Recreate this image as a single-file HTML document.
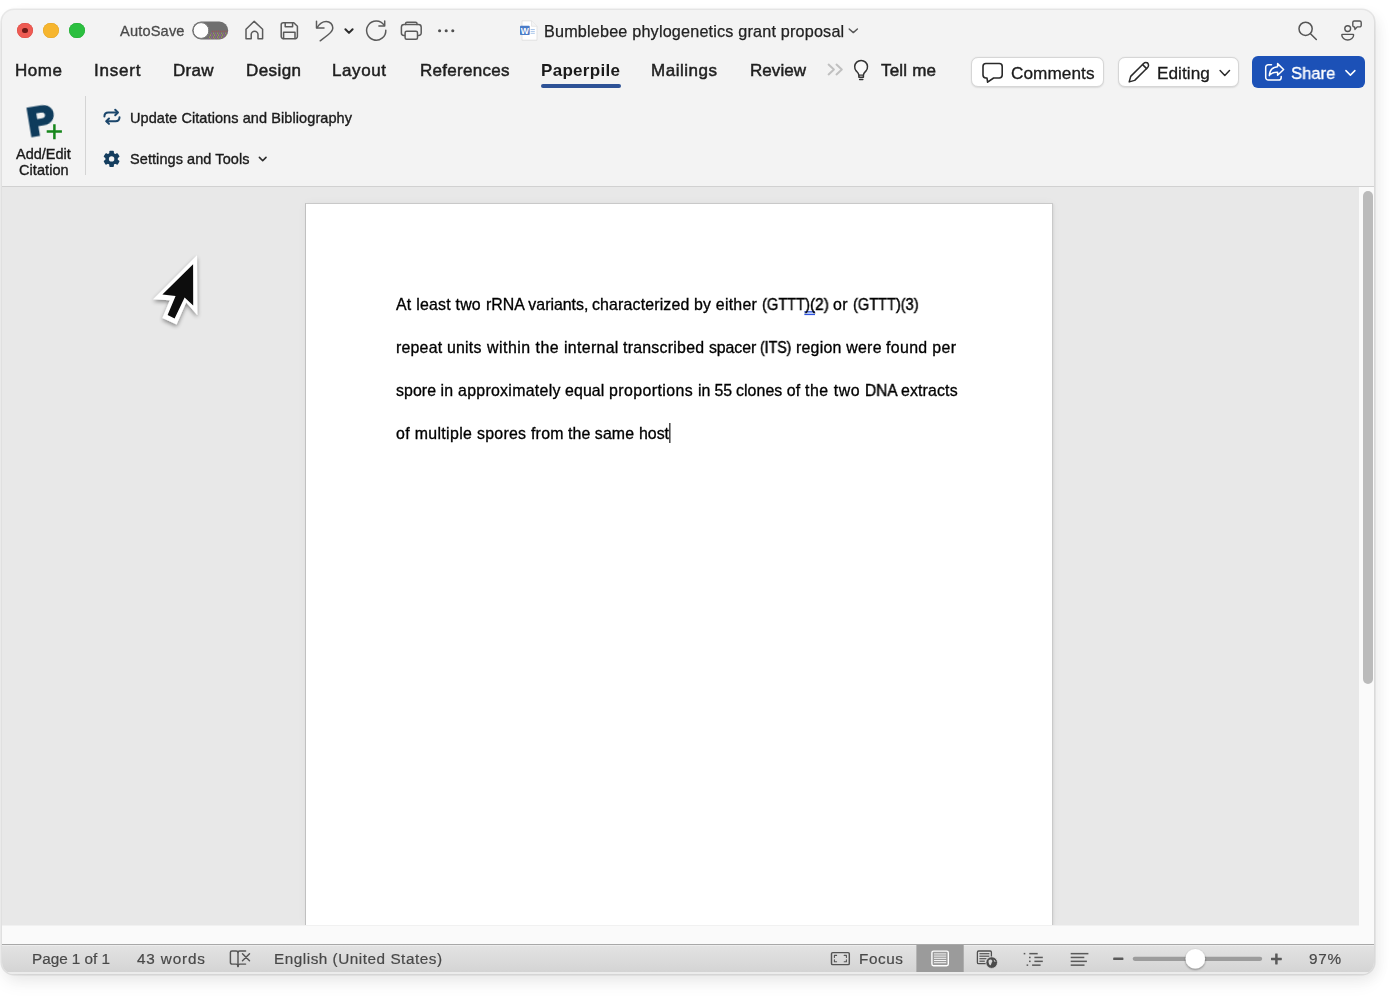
<!DOCTYPE html>
<html lang="en"><head><meta charset="utf-8"><title>Bumblebee phylogenetics grant proposal</title>
<style>
html,body{margin:0;padding:0;}
body{width:1400px;height:1000px;background:#fff;position:relative;overflow:hidden;font-family:"Liberation Sans",sans-serif;}
.abs{position:absolute;}
.t{position:absolute;white-space:pre;font-family:"Liberation Sans",sans-serif;will-change:transform;}
#win{position:absolute;left:2px;top:10px;width:1372px;height:964px;border-radius:12px;background:#f3f3f3;
 box-shadow:0 0 0 1.6px rgba(0,0,0,0.085), 0 9px 18px rgba(0,0,0,0.06), 5px 4px 14px rgba(0,0,0,0.05);overflow:hidden;}
#win > div{position:absolute;}
#ribline{left:0;top:176.1px;width:1372px;height:1.5px;background:#d1d1d1;box-shadow:0 1px 0 #ebebeb;}
#docbg{left:0;top:177px;width:1357px;height:738px;background:#e8e8e8;}
#vtrack{left:1357px;top:177px;width:16px;height:757px;background:#fafafa;}
#vthumb{left:1360.9px;top:181px;width:10.2px;height:493px;border-radius:5.1px;background:#bbbbbb;}
#hstrip{left:0;top:915px;width:1357px;height:19px;background:#fafafa;border-top:1px solid #f1f1f1;box-sizing:border-box;}
#status{left:0;top:934px;width:1372px;height:28px;background:linear-gradient(#e3e3e3,#d4d4d4);border-top:1px solid #a8a8a8;box-sizing:border-box;box-shadow:inset 0 1px 0 rgba(255,255,255,0.35);}
#statedge{left:0;top:962px;width:1372px;height:2px;background:#ececec;}
#page{left:303px;top:192.5px;width:747.5px;height:722.5px;background:#fff;border:solid #c9c9c9;border-width:1.5px 1.6px 0 1px;border-left-color:#c0c0c0;box-sizing:border-box;box-shadow:0.5px 0.5px 2px rgba(0,0,0,0.06), 0 0 9px rgba(0,0,0,0.035);}
.btn{position:absolute;box-sizing:border-box;border-radius:7px;background:#fff;border:1px solid #d6d6d6;box-shadow:0 0.5px 1.5px rgba(0,0,0,0.10);}
svg{position:absolute;overflow:visible;}

</style></head><body>
<div id="win">
  <div id="ribline"></div>
  <div id="docbg"></div>
  <div id="page"></div>
  <div id="vtrack"></div>
  <div id="vthumb"></div>
  <div id="hstrip"></div>
  <div id="status"></div>
  <div id="statedge"></div>
</div>
<!-- traffic lights -->
<div class="abs" style="left:17.2px;top:22.8px;width:15.7px;height:15.7px;border-radius:50%;background:#ee5b53;box-shadow:inset 0 0 0 0.5px #dd4a42;"></div>
<div class="abs" style="left:22.4px;top:28px;width:5.4px;height:5.4px;border-radius:50%;background:#6e1a17;"></div>
<div class="abs" style="left:43.2px;top:22.8px;width:15.7px;height:15.7px;border-radius:50%;background:#f6b52e;box-shadow:inset 0 0 0 0.5px #e2a425;"></div>
<div class="abs" style="left:69.2px;top:22.8px;width:15.7px;height:15.7px;border-radius:50%;background:#2bbf3f;box-shadow:inset 0 0 0 0.5px #22ab33;"></div>
<!-- buttons -->
<div class="btn" style="left:971px;top:56.8px;width:132.5px;height:30.2px;"></div>
<div class="btn" style="left:1117.8px;top:56.8px;width:121px;height:30.2px;"></div>
<div class="abs" style="left:1252px;top:56px;width:112.5px;height:32px;border-radius:6px;background:#1c51b7;"></div>
<!-- tab underline -->
<div class="abs" style="left:541px;top:84px;width:80px;height:3.5px;border-radius:2px;background:#2d5296;"></div>
<!-- ribbon sep -->
<div class="abs" style="left:84.5px;top:96px;width:1px;height:79px;background:#d4d4d4;"></div>

<svg class="ov" width="1400" height="1000" viewBox="0 0 1400 1000" style="left:0;top:0;">
 <defs>
  <filter id="cshadow" x="-50%" y="-50%" width="200%" height="200%"><feGaussianBlur in="SourceAlpha" stdDeviation="2.2"/><feOffset dx="0" dy="2"/><feComponentTransfer><feFuncA type="linear" slope="0.45"/></feComponentTransfer><feMerge><feMergeNode/><feMergeNode in="SourceGraphic"/></feMerge></filter>
  <filter id="kshadow" x="-50%" y="-50%" width="200%" height="200%"><feGaussianBlur in="SourceAlpha" stdDeviation="0.9"/><feOffset dx="0" dy="0.6"/><feComponentTransfer><feFuncA type="linear" slope="0.45"/></feComponentTransfer><feMerge><feMergeNode/><feMergeNode in="SourceGraphic"/></feMerge></filter>
  <pattern id="dith" x="208" y="30.6" width="4" height="4" patternUnits="userSpaceOnUse">
   <rect x="0.2" y="0.2" width="0.9" height="0.9" fill="#d23cd2"/><rect x="2.2" y="0.2" width="0.9" height="0.9" fill="#cfd230"/>
   <rect x="1.2" y="2.2" width="0.9" height="0.9" fill="#cfd230"/><rect x="3.2" y="2.2" width="0.9" height="0.9" fill="#d23cd2"/>
  </pattern>
  <pattern id="dithr" x="208" y="30.6" width="2" height="4" patternUnits="userSpaceOnUse">
   <rect x="0.2" y="0.2" width="0.9" height="0.9" fill="#d03434"/>
  </pattern>
  <clipPath id="pill"><rect x="192.2" y="21.6" width="36" height="17.8" rx="8.9"/></clipPath>
 </defs>
 <!-- ===== title bar icons ===== -->
 <g fill="none" stroke="#5b5b5b" stroke-width="1.5" stroke-linecap="round" stroke-linejoin="round">
  <!-- toggle -->
  <rect x="192.2" y="21.6" width="36" height="17.8" rx="8.9" fill="#6f6f6f" stroke="none"/>
  <g clip-path="url(#pill)" stroke="none"><path d="M212 30.6 H228 V32.6 H210.6 Z" fill="url(#dithr)"/><path d="M210.4 32.6 H228 V39.4 H207 Z" fill="url(#dith)"/></g>
  <circle cx="201.1" cy="30.5" r="7.9" fill="#fdfdfd" stroke="#737373" stroke-width="1"/>
  <!-- home -->
  <path d="M246 38.7 V29.2 L254.2 21.3 L262.6 29.2 V38.7 H258 V34.6 A3.4 3.4 0 0 0 251.2 34.6 V38.7 Z"/>
  <!-- save -->
  <path d="M283 22.7 H293.8 L297.4 26.3 V36.6 A2.1 2.1 0 0 1 295.3 38.7 H283.3 A2.1 2.1 0 0 1 281.2 36.6 V24.8 A2.1 2.1 0 0 1 283.3 22.7 Z"/>
  <path d="M285.2 22.9 V26.8 H292.6 V22.9"/>
  <path d="M283.6 38.5 V32.2 H295 V38.5"/>
  <!-- undo -->
  <path d="M316.5 21.2 V28 H324"/>
  <path d="M317 27.6 C319.5 23.4 322.6 21.4 326.2 21.4 C330 21.4 332.9 24.4 332.8 28 C332.7 31 330.6 32.8 327.8 35 L320.2 40.8"/>
  <!-- redo -->
  <path d="M384.7 21 V25.9 H378.9"/>
  <path d="M384.2 25.3 A9.6 9.6 0 1 0 385.8 30.2"/>
  <!-- printer -->
  <path d="M405.6 24.4 V23.6 A1.4 1.4 0 0 1 407 22.2 H415.6 A1.4 1.4 0 0 1 417 23.6 V24.4"/>
  <path d="M405 35.4 H403.8 A2.4 2.4 0 0 1 401.4 33 V27.2 A2.7 2.7 0 0 1 404.1 24.5 H418.5 A2.7 2.7 0 0 1 421.2 27.2 V33 A2.4 2.4 0 0 1 418.8 35.4 H417.6"/>
  <rect x="405.1" y="31.3" width="12.4" height="8" rx="1.5" fill="#f3f3f3"/>
 </g>
 <!-- undo chevron -->
 <path d="M345.4 29.2 L349 32.9 L352.6 29.2" fill="none" stroke="#2c2c2c" stroke-width="2" stroke-linecap="round" stroke-linejoin="round"/>
 <!-- dots -->
 <g fill="#505050"><circle cx="439.6" cy="30.8" r="1.55"/><circle cx="446.2" cy="30.8" r="1.55"/><circle cx="452.8" cy="30.8" r="1.55"/></g>
 <!-- doc icon -->
 <g>
  <path d="M522 20.8 H531.5 L537 26.3 V40.2 H522 Z" fill="#fff" stroke="#dcdcdc" stroke-width="0.8" stroke-linejoin="round"/>
  <path d="M531.5 20.8 V26.3 H537" fill="#f4f4f4" stroke="#dcdcdc" stroke-width="0.6"/>
  <rect x="520" y="25.8" width="9.7" height="9.2" rx="0.8" fill="#4a7cc8"/>
  <rect x="530.6" y="29" width="4.2" height="1" fill="#a9c6ea"/><rect x="530.6" y="30.9" width="4.2" height="1" fill="#a9c6ea"/><rect x="530.6" y="32.8" width="4.2" height="1" fill="#a9c6ea"/>
  <text x="524.85" y="33.6" font-family="Liberation Sans, sans-serif" font-weight="700" font-size="8.6" fill="#fff" text-anchor="middle">W</text>
 </g>
 <!-- title chevron -->
 <path d="M849.2 29 L853.3 32.6 L857.4 29" fill="none" stroke="#555" stroke-width="1.4" stroke-linecap="round" stroke-linejoin="round"/>
 <!-- search -->
 <g fill="none" stroke="#555" stroke-width="1.5" stroke-linecap="round">
  <circle cx="1305.6" cy="28.8" r="6.6"/><path d="M1310.5 33.7 L1316.3 39.5"/>
 </g>
 <!-- people -->
 <g fill="none" stroke="#555" stroke-width="1.4" stroke-linejoin="round" stroke-linecap="round">
  <circle cx="1347.7" cy="28.6" r="2.9"/>
  <path d="M1342.4 34.4 H1353 A0.6 0.6 0 0 1 1353.6 35 A5.9 5 0 0 1 1341.8 35 A0.6 0.6 0 0 1 1342.4 34.4 Z"/>
  <path d="M1354.3 21 H1359.7 A1.5 1.5 0 0 1 1361.2 22.5 V25.4 A1.5 1.5 0 0 1 1359.7 26.9 H1357.2 L1355 29.4 L1354.6 26.9 H1354.3 A1.5 1.5 0 0 1 1352.8 25.4 V22.5 A1.5 1.5 0 0 1 1354.3 21 Z"/>
 </g>
 <!-- ===== tab row ===== -->
 <g fill="none" stroke="#c0c0c0" stroke-width="2" stroke-linecap="round" stroke-linejoin="round">
  <path d="M828.6 64.6 L833.9 69.5 L828.6 74.4"/><path d="M836.5 64.6 L841.8 69.5 L836.5 74.4"/>
 </g>
 <!-- bulb -->
 <g fill="none" stroke="#333" stroke-width="1.5" stroke-linecap="round" stroke-linejoin="round">
  <path d="M858.9 77.2 V75.2 C858.9 73.2 857.5 72.2 856.2 70.9 A6.4 6.4 0 1 1 866 70.9 C864.7 72.2 863.4 73.2 863.4 75.2 V77.2 Z" fill="#f9f9f9"/>
  <path d="M859 75.2 H863.3" stroke-width="1.2"/>
  <path d="M859.6 79.5 H862.8"/>
 </g>
 <!-- comment bubble -->
 <path d="M985.9 63.5 H999.3 A2.9 2.9 0 0 1 1002.2 66.4 V75.1 A2.9 2.9 0 0 1 999.3 78 H993.6 L987.6 82.2 L987 78 H985.9 A2.9 2.9 0 0 1 983 75.1 V66.4 A2.9 2.9 0 0 1 985.9 63.5 Z" fill="none" stroke="#2a2a2a" stroke-width="1.6" stroke-linejoin="round"/>
 <!-- pencil -->
 <g fill="none" stroke="#2a2a2a" stroke-width="1.5" stroke-linejoin="round" stroke-linecap="round">
  <path d="M1129.2 81.9 L1130.7 76.4 L1143.6 63.5 A3.1 3.1 0 0 1 1148 63.5 L1147.6 63.1 A3.1 3.1 0 0 1 1147.6 67.5 L1134.7 80.4 Z"/>
  <path d="M1142.6 64.6 L1146.6 68.6"/>
 </g>
 <path d="M1220.1 70.6 L1224.8 75.4 L1229.5 70.6" fill="none" stroke="#2a2a2a" stroke-width="1.5" stroke-linecap="round" stroke-linejoin="round"/>
 <!-- share icon -->
 <g fill="none" stroke="#fff" stroke-width="1.5" stroke-linejoin="round" stroke-linecap="round">
  <path d="M1271.5 64.8 H1268.3 A2.6 2.6 0 0 0 1265.7 67.4 V77.5 A2.6 2.6 0 0 0 1268.3 80.1 H1278.6 A2.6 2.6 0 0 0 1281.2 77.5 V76.4"/>
  <path d="M1277.6 63.6 L1283.6 69.5 L1277.6 75.2 V72.2 C1273.6 72 1271 73 1269.3 75.6 C1269.6 70.6 1272.6 67.2 1277.6 66.8 Z"/>
 </g>
 <path d="M1345.9 70.6 L1350.4 75.1 L1354.9 70.6" fill="none" stroke="#fff" stroke-width="1.5" stroke-linecap="round" stroke-linejoin="round"/>
 <!-- ===== ribbon ===== -->
 <!-- plus -->
 <path d="M54.4 124.2 V139.3 M46.7 131.6 H61.9" stroke="#16861b" stroke-width="2.5" fill="none"/>
 <!-- update arrows -->
 <g fill="none" stroke="#1b466b" stroke-width="2" stroke-linecap="round" stroke-linejoin="round">
  <path d="M104.4 116.6 C104.4 114 106 112.5 108.4 112.5 H117.6"/><path d="M115.2 109.8 L117.9 112.5 L115.2 115.2"/>
  <path d="M119.5 117.2 C119.5 119.8 117.9 121.2 115.5 121.2 H106.6"/><path d="M109 118.5 L106.3 121.2 L109 123.9"/>
 </g>
 <!-- gear -->
 <g transform="translate(111.6 158.9)">
  <g fill="#143d5e">
   <circle r="6.2"/>
   <g id="teeth"><rect x="-2.3" y="-8.1" width="4.6" height="16.2" rx="0.9"/></g>
   <rect x="-2.3" y="-8.1" width="4.6" height="16.2" rx="0.9" transform="rotate(60)"/>
   <rect x="-2.3" y="-8.1" width="4.6" height="16.2" rx="0.9" transform="rotate(120)"/>
  </g>
  <circle r="2.7" fill="#f3f3f3"/>
 </g>
 <path d="M259.4 157.4 L262.7 160.7 L266 157.4" fill="none" stroke="#2a2a2a" stroke-width="1.6" stroke-linecap="round" stroke-linejoin="round"/>
 <!-- ===== document ===== -->
 <rect x="669.3" y="423" width="1.1" height="20" fill="#000"/>
 <rect x="804.4" y="311.6" width="10.6" height="3.4" fill="#cfe0fa"/><g fill="#2f52e0"><rect x="804.4" y="311.2" width="10.6" height="1.2"/><rect x="804.4" y="313.9" width="10.6" height="1.2"/></g>
 <!-- cursor -->
 <g filter="url(#cshadow)">
  <path d="M197 255.2 L197.4 315.2 L186.2 302.6 L176.6 324.6 L162.4 318 L169.8 300.2 L153.2 299.2 Z" fill="#fff"/>
  <path d="M193.1 264.2 L193.2 305.6 L184.6 297.4 L174.6 318.4 L167.6 315 L175.6 296 L162.4 294.6 Z" fill="#0c0c0c"/>
 </g>
 <!-- ===== status bar ===== -->
 <g fill="none" stroke="#555" stroke-width="1.45" stroke-linecap="round" stroke-linejoin="round">
  <path d="M238 952.6 C238 951.4 237.2 950.9 236.2 950.9 H232 A1.6 1.6 0 0 0 230.4 952.5 V962.5 A1.6 1.6 0 0 0 232 964.1 H236.2 C237.2 964.1 238 964.7 238 966.4 V952.6"/>
  <path d="M238 952.6 C238 951.4 238.8 950.9 239.8 950.9 H245.6"/><path d="M238 966.4 C238 964.7 238.8 964.1 239.8 964.1 H245.6"/>
  <path d="M242.5 953.7 L249.5 960.7 M249.5 953.7 L242.5 960.7"/>
  <!-- focus -->
  <rect x="831.5" y="952.6" width="17.8" height="12" rx="1.2"/>
  <path d="M834.4 957.4 V955.4 H836.6 M844.2 955.4 H846.4 V957.4 M846.4 959.8 V961.8 H844.2 M836.6 961.8 H834.4 V959.8" stroke-width="1.1"/>
 </g>
 <!-- print layout selected -->
 <rect x="916.4" y="945" width="47.3" height="27" fill="#9b9b9b"/>
 <rect x="931.9" y="951.1" width="16.4" height="14.6" rx="1.6" fill="none" stroke="#fff" stroke-width="1.4"/>
 <g fill="#f4f4f4"><rect x="934" y="953.4" width="12.2" height="1"/><rect x="934" y="955.6" width="12.2" height="1"/><rect x="934" y="957.8" width="12.2" height="1"/><rect x="934" y="960" width="12.2" height="1"/><rect x="934" y="962.2" width="12.2" height="1"/></g>
 <!-- web layout -->
 <rect x="977.4" y="951" width="14" height="12.6" rx="1.2" fill="none" stroke="#4f4f4f" stroke-width="1.3"/>
 <g fill="#555"><rect x="979.4" y="953.1" width="10" height="1.2"/><rect x="979.4" y="955.6" width="10" height="1.2"/><rect x="979.4" y="958.1" width="7" height="1.2"/><rect x="979.4" y="960.6" width="5.4" height="1.2"/></g>
 <circle cx="991.7" cy="962.6" r="5.8" fill="#4b4b4b" stroke="#dcdcdc" stroke-width="0.8"/>
 <path d="M988.6 960.4 C989.8 959 991.6 959.4 992.2 960.6 C992.8 961.8 991.8 962.4 991.4 963.4 C991 964.6 990.6 965.8 989.8 965 C989 964 988.2 962 988.6 960.4 Z M993.6 959.6 C994.6 960 995.4 961 995.6 962 C995 962.4 994 961.8 993.6 959.6 Z" fill="#d8d8d8"/>
 <!-- outline -->
 <g fill="#5a5a5a">
  <rect x="1023.7" y="952.9" width="1.6" height="1.5"/><rect x="1029.3" y="952.9" width="8.4" height="1.5"/>
  <rect x="1029" y="956.7" width="1.6" height="1.5"/><rect x="1034.4" y="956.7" width="8.4" height="1.5"/>
  <rect x="1029" y="960.6" width="1.6" height="1.5"/><rect x="1034.4" y="960.6" width="8.4" height="1.5"/>
  <rect x="1026.6" y="964.4" width="1.6" height="1.5"/><rect x="1032.1" y="964.4" width="8.5" height="1.5"/>
  <!-- draft -->
  <rect x="1070.7" y="952.9" width="17.7" height="1.5"/><rect x="1070.7" y="956.7" width="13.6" height="1.5"/>
  <rect x="1070.7" y="960.6" width="16.2" height="1.5"/><rect x="1070.7" y="964.4" width="13.8" height="1.5"/>
  <!-- minus / plus -->
  <rect x="1113.2" y="957.5" width="10.2" height="2.5" rx="0.6"/>
  <rect x="1271" y="957.7" width="10.8" height="2.5" rx="0.4"/><rect x="1275.15" y="953.4" width="2.5" height="11.1" rx="0.4"/>
 </g>
 <rect x="1132.7" y="956.7" width="129.5" height="4.2" rx="2.1" fill="#9c9c9c"/>
 <circle cx="1195.3" cy="958.8" r="9.8" fill="#fff" filter="url(#kshadow)"/>
</svg>
<!-- P logo as real text -->
<div class="abs" style="left:24px;top:100px;width:34px;height:42px;transform:rotate(-9.5deg) scaleX(1.04);transform-origin:50% 50%;font-family:'Liberation Sans',sans-serif;font-weight:700;font-size:39px;line-height:42px;color:#0f3c5c;-webkit-text-stroke:2.8px #0f3c5c;text-align:center;will-change:transform;">P</div>


<!-- text -->
<div class="t" style="left:119.8px;top:21.00px;font-size:14.6px;line-height:20px;font-weight:400;color:#4a4a4a;letter-spacing:0.172px;-webkit-text-stroke:0.3px #4a4a4a;">AutoSave</div>
<div class="t" style="left:543.8px;top:19.50px;font-size:16.2px;line-height:23px;font-weight:400;color:#222;letter-spacing:0.184px;-webkit-text-stroke:0.25px #222;">Bumblebee phylogenetics grant proposal</div>
<div class="t" style="left:15px;top:59.00px;font-size:17px;line-height:24px;font-weight:400;color:#1f1f1f;letter-spacing:0.547px;-webkit-text-stroke:0.5px #1f1f1f;">Home</div>
<div class="t" style="left:94px;top:59.00px;font-size:17px;line-height:24px;font-weight:400;color:#1f1f1f;letter-spacing:0.794px;-webkit-text-stroke:0.5px #1f1f1f;">Insert</div>
<div class="t" style="left:173px;top:59.00px;font-size:17px;line-height:24px;font-weight:400;color:#1f1f1f;letter-spacing:0.276px;-webkit-text-stroke:0.5px #1f1f1f;">Draw</div>
<div class="t" style="left:245.5px;top:59.00px;font-size:17px;line-height:24px;font-weight:400;color:#1f1f1f;letter-spacing:0.416px;-webkit-text-stroke:0.5px #1f1f1f;">Design</div>
<div class="t" style="left:332px;top:59.00px;font-size:17px;line-height:24px;font-weight:400;color:#1f1f1f;letter-spacing:0.591px;-webkit-text-stroke:0.5px #1f1f1f;">Layout</div>
<div class="t" style="left:419.5px;top:59.00px;font-size:17px;line-height:24px;font-weight:400;color:#1f1f1f;letter-spacing:0.285px;-webkit-text-stroke:0.5px #1f1f1f;">References</div>
<div class="t" style="left:651px;top:59.00px;font-size:17px;line-height:24px;font-weight:400;color:#1f1f1f;letter-spacing:0.520px;-webkit-text-stroke:0.5px #1f1f1f;">Mailings</div>
<div class="t" style="left:750px;top:59.00px;font-size:17px;line-height:24px;font-weight:400;color:#1f1f1f;letter-spacing:0.050px;-webkit-text-stroke:0.5px #1f1f1f;">Review</div>
<div class="t" style="left:881px;top:59.00px;font-size:17px;line-height:24px;font-weight:400;color:#1f1f1f;letter-spacing:0.190px;-webkit-text-stroke:0.5px #1f1f1f;">Tell me</div>
<div class="t" style="left:541px;top:59.00px;font-size:17px;line-height:24px;font-weight:700;color:#1a1a1a;letter-spacing:0.307px;">Paperpile</div>
<div class="t" style="left:1010.5px;top:61.40px;font-size:17.2px;line-height:24px;font-weight:400;color:#1a1a1a;letter-spacing:0.058px;-webkit-text-stroke:0.3px #1a1a1a;">Comments</div>
<div class="t" style="left:1156.8px;top:61.40px;font-size:17.2px;line-height:24px;font-weight:400;color:#1a1a1a;letter-spacing:0.040px;-webkit-text-stroke:0.3px #1a1a1a;">Editing</div>
<div class="t" style="left:1291.4px;top:61.40px;font-size:17.2px;line-height:24px;font-weight:400;color:#ffffff;letter-spacing:0.000px;transform:scaleX(0.9678);transform-origin:0 50%;-webkit-text-stroke:0.35px #fff;">Share</div>
<div class="t" style="left:16.2px;top:144.00px;font-size:14.5px;line-height:20px;font-weight:400;color:#1a1a1a;letter-spacing:-0.018px;-webkit-text-stroke:0.35px #1a1a1a;">Add/Edit</div>
<div class="t" style="left:18.7px;top:159.50px;font-size:14.5px;line-height:20px;font-weight:400;color:#1a1a1a;letter-spacing:0.075px;-webkit-text-stroke:0.35px #1a1a1a;">Citation</div>
<div class="t" style="left:130px;top:108.00px;font-size:14.5px;line-height:20px;font-weight:400;color:#1a1a1a;letter-spacing:0.086px;-webkit-text-stroke:0.35px #1a1a1a;">Update Citations and Bibliography</div>
<div class="t" style="left:130px;top:149.00px;font-size:14.5px;line-height:20px;font-weight:400;color:#1a1a1a;letter-spacing:0.074px;-webkit-text-stroke:0.35px #1a1a1a;">Settings and Tools</div>
<div class="t" style="left:396px;top:293.50px;font-size:15.9px;line-height:22px;font-weight:400;color:#000;letter-spacing:0.234px;-webkit-text-stroke:0.32px #000;">At least two </div>
<div class="t" style="left:485.6px;top:293.50px;font-size:15.9px;line-height:22px;font-weight:400;color:#000;letter-spacing:-0.004px;-webkit-text-stroke:0.32px #000;">rRNA variants, </div>
<div class="t" style="left:592.4px;top:293.50px;font-size:15.9px;line-height:22px;font-weight:400;color:#000;letter-spacing:0.156px;-webkit-text-stroke:0.32px #000;">characterized </div>
<div class="t" style="left:694.4px;top:293.50px;font-size:15.9px;line-height:22px;font-weight:400;color:#000;letter-spacing:0.223px;-webkit-text-stroke:0.32px #000;">by either </div>
<div class="t" style="left:762px;top:293.50px;font-size:15.9px;line-height:22px;font-weight:400;color:#000;letter-spacing:0.000px;transform:scaleX(0.9217);transform-origin:0 50%;-webkit-text-stroke:0.46px #000;">(GTTT)</div>
<div class="t" style="left:810px;top:293.50px;font-size:15.9px;line-height:22px;font-weight:400;color:#000;letter-spacing:0.000px;transform:scaleX(0.9646);transform-origin:0 50%;-webkit-text-stroke:0.46px #000;">(2) </div>
<div class="t" style="left:833px;top:293.50px;font-size:15.9px;line-height:22px;font-weight:400;color:#000;letter-spacing:0.484px;-webkit-text-stroke:0.32px #000;">or </div>
<div class="t" style="left:853px;top:293.50px;font-size:15.9px;line-height:22px;font-weight:400;color:#000;letter-spacing:0.000px;transform:scaleX(0.9175);transform-origin:0 50%;-webkit-text-stroke:0.46px #000;">(GTTT)(3)</div>
<div class="t" style="left:396.4px;top:336.50px;font-size:15.9px;line-height:22px;font-weight:400;color:#000;letter-spacing:0.211px;-webkit-text-stroke:0.32px #000;">repeat units </div>
<div class="t" style="left:486.6px;top:336.50px;font-size:15.9px;line-height:22px;font-weight:400;color:#000;letter-spacing:0.496px;-webkit-text-stroke:0.32px #000;">within the </div>
<div class="t" style="left:563.6px;top:336.50px;font-size:15.9px;line-height:22px;font-weight:400;color:#000;letter-spacing:0.317px;-webkit-text-stroke:0.32px #000;">internal </div>
<div class="t" style="left:623px;top:336.50px;font-size:15.9px;line-height:22px;font-weight:400;color:#000;letter-spacing:0.247px;-webkit-text-stroke:0.32px #000;">transcribed </div>
<div class="t" style="left:709px;top:336.50px;font-size:15.9px;line-height:22px;font-weight:400;color:#000;letter-spacing:-0.104px;-webkit-text-stroke:0.32px #000;">spacer </div>
<div class="t" style="left:760.4px;top:336.50px;font-size:15.9px;line-height:22px;font-weight:400;color:#000;letter-spacing:0.000px;transform:scaleX(0.8859);transform-origin:0 50%;-webkit-text-stroke:0.46px #000;">(ITS) </div>
<div class="t" style="left:795.6px;top:336.50px;font-size:15.9px;line-height:22px;font-weight:400;color:#000;letter-spacing:0.246px;-webkit-text-stroke:0.32px #000;">region were </div>
<div class="t" style="left:886px;top:336.50px;font-size:15.9px;line-height:22px;font-weight:400;color:#000;letter-spacing:0.355px;-webkit-text-stroke:0.32px #000;">found per</div>
<div class="t" style="left:396px;top:379.50px;font-size:15.9px;line-height:22px;font-weight:400;color:#000;letter-spacing:0.072px;-webkit-text-stroke:0.32px #000;">spore in </div>
<div class="t" style="left:457.6px;top:379.50px;font-size:15.9px;line-height:22px;font-weight:400;color:#000;letter-spacing:0.290px;-webkit-text-stroke:0.32px #000;">approximately </div>
<div class="t" style="left:565px;top:379.50px;font-size:15.9px;line-height:22px;font-weight:400;color:#000;letter-spacing:0.117px;-webkit-text-stroke:0.32px #000;">equal </div>
<div class="t" style="left:609px;top:379.50px;font-size:15.9px;line-height:22px;font-weight:400;color:#000;letter-spacing:0.423px;-webkit-text-stroke:0.32px #000;">proportions </div>
<div class="t" style="left:698px;top:379.50px;font-size:15.9px;line-height:22px;font-weight:400;color:#000;letter-spacing:-0.079px;-webkit-text-stroke:0.32px #000;">in 55 </div>
<div class="t" style="left:736.4px;top:379.50px;font-size:15.9px;line-height:22px;font-weight:400;color:#000;letter-spacing:0.057px;-webkit-text-stroke:0.32px #000;">clones of </div>
<div class="t" style="left:805px;top:379.50px;font-size:15.9px;line-height:22px;font-weight:400;color:#000;letter-spacing:0.543px;-webkit-text-stroke:0.32px #000;">the two </div>
<div class="t" style="left:865px;top:379.50px;font-size:15.9px;line-height:22px;font-weight:400;color:#000;letter-spacing:0.000px;transform:scaleX(0.9705);transform-origin:0 50%;-webkit-text-stroke:0.46px #000;">DNA </div>
<div class="t" style="left:901px;top:379.50px;font-size:15.9px;line-height:22px;font-weight:400;color:#000;letter-spacing:0.137px;-webkit-text-stroke:0.32px #000;">extracts</div>
<div class="t" style="left:396px;top:422.50px;font-size:15.9px;line-height:22px;font-weight:400;color:#000;letter-spacing:0.346px;-webkit-text-stroke:0.32px #000;">of multiple </div>
<div class="t" style="left:477px;top:422.50px;font-size:15.9px;line-height:22px;font-weight:400;color:#000;letter-spacing:0.257px;-webkit-text-stroke:0.32px #000;">spores from </div>
<div class="t" style="left:568.4px;top:422.50px;font-size:15.9px;line-height:22px;font-weight:400;color:#000;letter-spacing:0.091px;-webkit-text-stroke:0.32px #000;">the same </div>
<div class="t" style="left:639px;top:422.50px;font-size:15.9px;line-height:22px;font-weight:400;color:#000;letter-spacing:-0.016px;-webkit-text-stroke:0.32px #000;">host</div>
<div class="t" style="left:32px;top:947.50px;font-size:15.3px;line-height:21px;font-weight:400;color:#484848;letter-spacing:-0.025px;-webkit-text-stroke:0.2px #484848;">Page 1 of 1</div>
<div class="t" style="left:137px;top:947.50px;font-size:15.3px;line-height:21px;font-weight:400;color:#484848;letter-spacing:0.846px;-webkit-text-stroke:0.2px #484848;">43 words</div>
<div class="t" style="left:274px;top:947.50px;font-size:15.3px;line-height:21px;font-weight:400;color:#484848;letter-spacing:0.525px;-webkit-text-stroke:0.2px #484848;">English (United States)</div>
<div class="t" style="left:859px;top:947.50px;font-size:15.3px;line-height:21px;font-weight:400;color:#484848;letter-spacing:0.586px;-webkit-text-stroke:0.2px #484848;">Focus</div>
<div class="t" style="left:1309px;top:947.50px;font-size:15.3px;line-height:21px;font-weight:400;color:#484848;letter-spacing:0.688px;-webkit-text-stroke:0.2px #484848;">97%</div>
</body></html>
